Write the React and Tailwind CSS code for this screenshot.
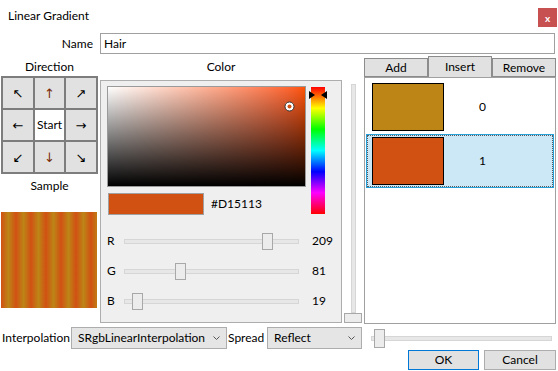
import React from 'react'

const cell = "bg-[#e1e1e1] flex items-center justify-center font-['DejaVu_Sans',sans-serif] text-[13px] leading-none";

function Slider({ label, value, pos }) {
    return (
        <div className="h-[30px] flex items-center">
            <div className="w-[17px]">{label}</div>
            <div className="relative w-[175px] h-[5px] bg-[#e7e7e7] border border-[#d6d6d6]">
                <div className="absolute top-[-7px] w-[11px] h-[17px] bg-[#ececec] border border-[#a8a8a8]" style={{ left: pos }} />
            </div>
            <div className="ml-[13px]">{value}</div>
        </div>
    );
}

function Combo({ text, width }) {
    return (
        <div className={`${width} h-[22px] border border-[#adadad] bg-[#e5e5e5] flex items-center justify-between pl-[6px] pr-[6px]`}>
            <span>{text}</span>
            <svg width="7" height="4" viewBox="0 0 7 4">
                <path d="M0.5 0.5 L3.5 3.5 L6.5 0.5" fill="none" stroke="#555" strokeWidth="1" />
            </svg>
        </div>
    );
}

export default function App() {
    return (
        <div className="w-[558px] h-[371px] bg-white overflow-hidden font-['Lato','Noto_Sans',sans-serif] text-[12px] text-black flex flex-col">
            {/* Title bar */}
            <div className="h-[33px] flex items-start justify-between">
                <div className="pl-[8px] pt-[8px] leading-[16px]">Linear Gradient</div>
                <div className="mt-[8px] mr-[1px] w-[19px] h-[19px] bg-[#c75050] text-white font-bold flex items-center justify-center text-[10px] leading-none">x</div>
            </div>

            {/* Name */}
            <div className="h-[21px] flex items-center">
                <div className="w-[93px] text-right">Name</div>
                <div className="ml-[7px] w-[455px] h-[21px] border border-[#a0a0a0] px-[3px] flex items-center">Hair</div>
            </div>

            {/* Main */}
            <div className="mt-[3px] h-[268px] flex">
                {/* Direction + sample */}
                <div className="ml-[1px] w-[97px] flex flex-col">
                    <div className="h-[19px] leading-[19px] text-center">Direction</div>
                    <div className="grid grid-cols-[30px_29px_30px] grid-rows-[30px_30px_30px] gap-[2px] p-[2px] bg-[#7d7d7d] w-[97px]">
                        <div className={cell}>↖</div>
                        <div className={cell + " text-[#7a2e08]"}>↑</div>
                        <div className={cell}>↗</div>
                        <div className={cell}>←</div>
                        <div className="bg-white flex items-center justify-center">Start</div>
                        <div className={cell}>→</div>
                        <div className={cell}>↙</div>
                        <div className={cell + " text-[#7a2e08]"}>↓</div>
                        <div className={cell}>↘</div>
                    </div>
                    <div className="h-[24px] leading-[24px] text-center">Sample</div>
                    <div className="mt-[14px] w-[96px] h-[96px] bg-[repeating-linear-gradient(to_right,#D15113_0px,#BD8516_7.5px,#D15113_15px)]" />
                </div>

                {/* Color */}
                <div className="ml-[2px] w-[262px] flex flex-col">
                    <div className="w-[242px] h-[19px] leading-[19px] text-center">Color</div>
                    <div className="mt-[4px] flex">
                        <div className="w-[242px] h-[243px] border border-[#adadad] bg-[#efefef] pl-[6px] pt-[5px]">
                            <div className="flex gap-[5px] items-start">
                                <div className="w-[199px]">
                                    <div className="relative h-[101px] border border-[#9a9a9a] bg-linear-to-r from-white to-[#ff5300]">
                                        <div className="absolute inset-0 bg-linear-to-b from-transparent to-black" />
                                        <svg className="absolute left-[176px] top-[14px]" width="11" height="11" viewBox="0 0 11 11">
                                            <circle cx="5.5" cy="5.5" r="4.5" fill="#fff" stroke="#333" strokeWidth="1" />
                                            <circle cx="5.5" cy="5.5" r="2" fill="#d15113" />
                                        </svg>
                                    </div>
                                    <div className="mt-[6px] h-[22px] flex items-center">
                                        <div className="ml-[1px] w-[96px] h-[22px] bg-[#D15113] border border-[#a0a0a0]" />
                                        <div className="ml-[7px]">#D15113</div>
                                    </div>
                                </div>
                                <div className="relative mt-[1px] w-[14px] h-[127px] bg-[linear-gradient(to_bottom,#f00,#ff0,#0f0,#0ff,#00f,#f0f,#f00)]">
                                    <svg className="absolute left-[-2px] top-[4px]" width="18" height="8" viewBox="0 0 18 8">
                                        <polygon points="0,0 6,4 0,8" fill="#000" />
                                        <polygon points="18,0 12,4 18,8" fill="#000" />
                                    </svg>
                                </div>
                            </div>
                            <div className="mt-[11px]">
                                <Slider label="R" value="209" pos={137} />
                                <Slider label="G" value="81" pos={50} />
                                <Slider label="B" value="19" pos={7} />
                            </div>
                        </div>
                        <div className="ml-[2px] mt-[4px] w-[18px] flex flex-col items-center">
                            <div className="w-[5px] h-[229px] bg-[#e7e7e7] border border-[#d6d6d6]" />
                            <div className="w-[18px] h-[10px] bg-[#ececec] border border-[#a8a8a8]" />
                        </div>
                    </div>
                </div>

                {/* Stops */}
                <div className="ml-[2px] w-[192px] flex flex-col">
                    <div className="mt-[1px] h-[19px] flex">
                        <div className="w-[64px] h-[19px] border border-[#8c8c8c] bg-[#e1e1e1] flex items-center justify-center">Add</div>
                        <div className="w-[64px] h-[21px] -mt-[2px] border border-[#8c8c8c] border-b-0 bg-[#e1e1e1] flex items-start pt-[1px] justify-center">Insert</div>
                        <div className="w-[64px] h-[19px] border border-[#8c8c8c] bg-[#e1e1e1] flex items-center justify-center">Remove</div>
                    </div>
                    <div className="h-[247px] border border-[#a0a0a0] px-[1px] pt-[2px] bg-white">
                        <div className="h-[54px] border border-transparent flex items-center pl-[5px]">
                            <div className="w-[72px] h-[48px] bg-[#BD8516] border border-black" />
                            <div className="ml-[35px]">0</div>
                        </div>
                        <div className="h-[54px] border border-[#26a0da] bg-[#cce8f6]">
                            <div className="h-full border border-dotted border-[#5a5a5a] flex items-center pl-[4px]">
                                <div className="w-[72px] h-[48px] bg-[#D15113] border border-black" />
                                <div className="ml-[35px]">1</div>
                            </div>
                        </div>
                    </div>
                </div>
            </div>

            {/* Interpolation row */}
            <div className="mt-[2px] h-[22px] flex items-center">
                <div className="pl-[2px] w-[71px]">Interpolation</div>
                <Combo text="SRgbLinearInterpolation" width="w-[156px]" />
                <div className="w-[40px] pl-[1px]">Spread</div>
                <Combo text="Reflect" width="w-[95px]" />
                <div className="ml-[9px] w-[181px] relative h-[5px] bg-[#e7e7e7] border border-[#d6d6d6]">
                    <div className="absolute top-[-8px] left-[2px] w-[11px] h-[19px] bg-[#ececec] border border-[#a8a8a8]" />
                </div>
            </div>

            {/* Buttons */}
            <div className="mt-[1px] h-[20px] flex justify-end gap-[5px] pr-[2px]">
                <div className="w-[71px] h-[20px] border border-[#0078d7] bg-[#e1e1e1] flex items-center justify-center">OK</div>
                <div className="w-[72px] h-[20px] border border-[#adadad] bg-[#e1e1e1] flex items-center justify-center">Cancel</div>
            </div>
        </div>
    )
}
